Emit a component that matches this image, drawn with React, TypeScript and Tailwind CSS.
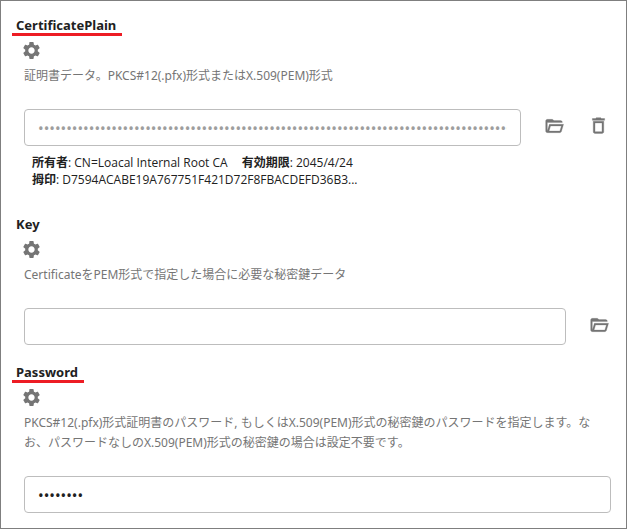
import { useId, useState } from "react";
import type { ReactNode } from "react";
import { MdSettings } from "react-icons/md";

type FieldProps = {
  title: string;
  description: string;
  marked?: boolean;
  secret?: boolean;
  muted?: boolean;
  initialValue?: string;
  actions?: ReactNode;
  details?: ReactNode;
};

function FolderOpenIcon() {
  return (
    <svg
      viewBox="0 -960 960 960"
      className="size-5"
      fill="currentColor"
      stroke="currentColor"
      strokeWidth={12}
    >
      <path d="M160-160q-33 0-56.5-23.5T80-240v-480q0-33 23.5-56.5T160-800h240l80 60h320q33 0 56.5 23.5T880-650H160v410l96-320h684L837-217q-8 26-29.5 41.5T760-160H160Zm84-80h516l72-240H316l-72 240Z" />
    </svg>
  );
}

function TrashIcon() {
  return (
    <svg
      viewBox="0 0 24 24"
      className="size-[21px]"
      fill="currentColor"
      stroke="currentColor"
      strokeWidth={0.4}
    >
      <path d="M6 19c0 1.1.9 2 2 2h8c1.1 0 2-.9 2-2V7H6v12zM8 9h8v10H8V9zm7.5-5-1-1h-5l-1 1H5v2h14V4h-3.5z" />
    </svg>
  );
}

function ActionButton({ label, children }: { label: string; children: ReactNode }) {
  return (
    <button
      type="button"
      aria-label={label}
      className="flex w-[45px] shrink-0 items-center justify-center pb-1 text-[#757575]"
    >
      {children}
    </button>
  );
}

function Field({
  title,
  description,
  marked = false,
  secret = false,
  muted = false,
  initialValue = "",
  actions,
  details,
}: FieldProps) {
  const id = useId();
  const [value, setValue] = useState(initialValue);

  return (
    <section>
      <label
        htmlFor={id}
        className={`ml-[11px] inline-block border-b-3 pr-[6px] pl-1 text-[13px] leading-4 font-bold text-[#212121] ${
          marked ? "border-[#ed1c24]" : "border-transparent"
        }`}
      >
        {title}
      </label>
      <div className="pr-[15px] pl-[23px]">
        <button
          type="button"
          aria-label={`${title} settings`}
          className="mt-1 -ml-[3px] block text-[#757575]"
        >
          <MdSettings size={21} />
        </button>
        <p className="pt-[5px] text-xs leading-5 text-[#757575]">{description}</p>
        <div className="flex items-center pt-[23px]">
          <input
            id={id}
            type={secret ? "password" : "text"}
            autoComplete="off"
            value={value}
            onChange={(e) => setValue(e.target.value)}
            className={`h-[37px] min-w-0 flex-1 rounded-sm border border-[#bdbdbd] bg-white px-[13px] text-[15px] outline-none ${
              muted ? "text-[#9e9e9e]" : "text-[#212121]"
            }`}
          />
          {actions && <div className="-mr-[10px] ml-[10px] flex">{actions}</div>}
        </div>
        {details}
      </div>
    </section>
  );
}

export default function App() {
  return (
    <main className="border border-[#7f7f7f] bg-white pt-[11px] pb-[15px] font-['Noto_Sans','Noto_Sans_CJK_JP',sans-serif]">
      <div className="flex flex-col gap-[14px]">
        <Field
          title="CertificatePlain"
          description="証明書データ。PKCS#12(.pfx)形式またはX.509(PEM)形式"
          marked
          secret
          muted
          initialValue={"x".repeat(120)}
          actions={
            <>
              <ActionButton label="Open file">
                <FolderOpenIcon />
              </ActionButton>
              <ActionButton label="Delete">
                <TrashIcon />
              </ActionButton>
            </>
          }
          details={
            <div className="px-2 pt-2 pb-[9px] font-['Open_Sans','Noto_Sans_CJK_JP',sans-serif] text-xs leading-[17px] text-[#212121]">
              <p>
                <b>所有者</b>: CN=Loacal Internal Root CA
                <span className="ml-[14px]">
                  <b>有効期限</b>: 2045/4/24
                </span>
              </p>
              <p>
                <b>拇印</b>: D7594ACABE19A767751F421D72F8FBACDEFD36B3...
              </p>
            </div>
          }
        />
        <Field
          title="Key"
          description="CertificateをPEM形式で指定した場合に必要な秘密鍵データ"
          actions={
            <ActionButton label="Open file">
              <FolderOpenIcon />
            </ActionButton>
          }
        />
        <Field
          title="Password"
          description="PKCS#12(.pfx)形式証明書のパスワード, もしくはX.509(PEM)形式の秘密鍵のパスワードを指定します。なお、パスワードなしのX.509(PEM)形式の秘密鍵の場合は設定不要です。"
          marked
          secret
          initialValue="password"
        />
      </div>
    </main>
  );
}
